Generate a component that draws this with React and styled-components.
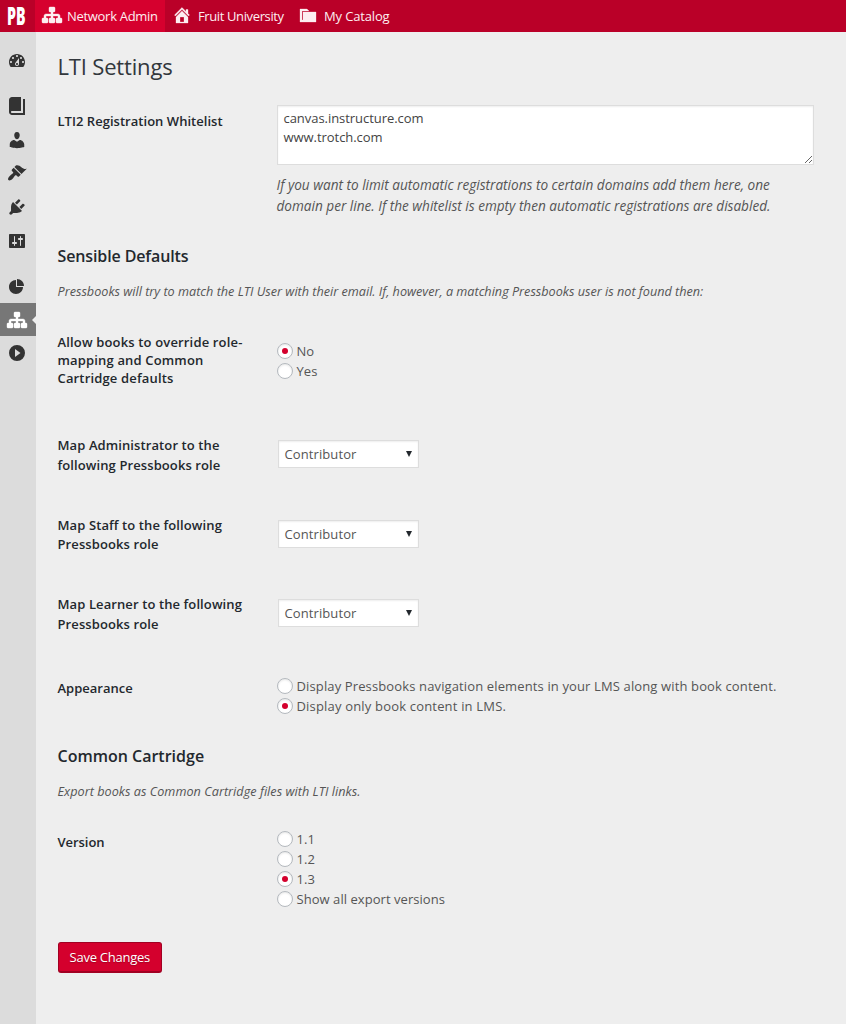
import React from 'react';
import styled, { createGlobalStyle } from 'styled-components';

const GlobalStyle = createGlobalStyle`
  * { box-sizing: border-box; }
  body {
    margin: 0;
    background: #eee;
    color: #444;
    font-family: 'Open Sans', 'Noto Sans', sans-serif;
    font-size: 13px;
  }
`;

const Page = styled.div`
  display: flex;
  flex-direction: column;
  min-height: 1024px;
`;

const TopBar = styled.header`
  display: flex;
  height: 32px;
  background: #ba0028;
  color: #fff;
`;

const Logo = styled.div`
  width: 35px;
  padding: 6px 0 0 7px;
`;

const LogoText = styled.span`
  display: inline-block;
  transform: scaleX(0.58);
  transform-origin: 0 0;
  font-size: 24.5px;
  font-weight: 800;
  line-height: 20px;
`;

const TopItem = styled.a`
  display: flex;
  align-items: center;
  width: ${(p) => p.$width}px;
  padding: 0 0 3px ${(p) => p.$inset}px;
  gap: ${(p) => p.$gap}px;
  background: ${(p) => (p.$active ? '#d6002e' : 'transparent')};
  color: #fdeef1;
  letter-spacing: ${(p) => p.$tracking}px;
  white-space: nowrap;
`;

const TopLabel = styled.span`
  padding-top: 2px;
`;

const Body = styled.div`
  display: flex;
  flex: 1;
`;

const Sidebar = styled.nav`
  width: 36px;
  padding-top: 12px;
  background: #dcdcdc;
`;

const SideGroup = styled.div`
  display: flex;
  flex-direction: column;
  margin-bottom: 11.8px;
`;

const SideItem = styled.a`
  position: relative;
  display: flex;
  align-items: center;
  height: 33.6px;
  padding-left: 7px;
  background: ${(p) => (p.$active ? '#777' : 'transparent')};
  color: ${(p) => (p.$active ? '#fff' : '#333')};
`;

const ActiveNotch = styled.span`
  position: absolute;
  right: 0;
  top: 13px;
  border: 4px solid transparent;
  border-left-width: 0;
  border-right-color: #eee;
`;

const Main = styled.main`
  flex: 1;
  padding: 19px 32px 0 21.5px;
`;

const Title = styled.h1`
  margin: 0 0 23px;
  color: #32373c;
  font-size: 22px;
  font-weight: 400;
  line-height: 31px;
  letter-spacing: -0.17px;
`;

const SectionTitle = styled.h2`
  margin: 0 0 14px;
  color: #23282d;
  font-size: 16px;
  font-weight: 600;
  line-height: 22px;
  letter-spacing: ${(p) => p.$tracking || 0}px;
`;

const Intro = styled.p`
  margin: 0 0 ${(p) => p.$gap}px;
  color: #555;
  font-size: 12.65px;
  font-style: italic;
  line-height: 20px;
  letter-spacing: ${(p) => p.$tracking || 0}px;
`;

const Row = styled.div`
  display: grid;
  grid-template-columns: 219px 1fr;
  align-items: start;
  height: ${(p) => p.$height}px;
`;

const Label = styled.div`
  padding-top: ${(p) => p.$offset || 0}px;
  color: #23282d;
  font-weight: 600;
  line-height: ${(p) => p.$leading || 18}px;
  letter-spacing: ${(p) => p.$tracking ?? 0.1}px;
  white-space: pre-line;
`;

const Control = styled.div`
  padding-top: ${(p) => p.$offset || 0}px;
`;

const TextArea = styled.textarea`
  display: block;
  width: 537px;
  height: 60px;
  margin: 0;
  padding: 3px 6px;
  border: 1px solid #ddd;
  box-shadow: inset 0 1px 2px rgba(0, 0, 0, 0.07);
  background: #fff;
  color: #444;
  font: inherit;
  line-height: 19px;
  letter-spacing: -0.05px;
  overflow: hidden;
`;

const Help = styled.p`
  margin: 8.5px 0 0;
  color: #555;
  font-size: 13.6px;
  font-style: italic;
  line-height: 21px;
  white-space: pre-line;
`;

const RadioLine = styled.label`
  display: flex;
  align-items: center;
  height: 20px;
  gap: 4px;
  color: #555;
  letter-spacing: ${(p) => p.$tracking}px;
  white-space: nowrap;
`;

const RadioDot = styled.span`
  display: flex;
  align-items: center;
  justify-content: center;
  width: 16px;
  height: 16px;
  border: 1px solid #b4b9be;
  border-radius: 50%;
  background: #fff;
  box-shadow: inset 0 1px 2px rgba(0, 0, 0, 0.1);

  &::after {
    content: '';
    width: 6px;
    height: 6px;
    border-radius: 50%;
    background: ${(p) => (p.$checked ? '#d4002d' : 'transparent')};
  }
`;

const SelectBox = styled.div`
  display: flex;
  align-items: center;
  justify-content: space-between;
  width: 141px;
  height: 28px;
  margin-left: 1px;
  padding: 0 6px;
  border: 1px solid #ddd;
  background: #fff;
  box-shadow: inset 0 1px 2px rgba(0, 0, 0, 0.07);
  color: #555;
  letter-spacing: 0.1px;
`;

const Caret = styled.span`
  border: 3px solid transparent;
  border-top: 6px solid #23282d;
  border-bottom-width: 0;
`;

const SaveButton = styled.button`
  display: block;
  width: 104.5px;
  height: 31px;
  padding: 0;
  border: 1px solid #a10022;
  border-bottom-width: 2px;
  border-radius: 3px;
  background: #d4002d;
  color: #fff;
  font: inherit;
  letter-spacing: -0.25px;
  text-shadow: 0 1px 1px #a10022;
`;

const PATHS = {
  network:
    'M18 13h1c.55 0 1 .45 1 1.01v2.98c0 .56-.45 1.01-1 1.01h-4c-.55 0-1-.45-1-1.01v-2.98c0-.56.45-1.01 1-1.01h1v-2h-5v2h1c.55 0 1 .45 1 1.01v2.98c0 .56-.45 1.01-1 1.01H8c-.55 0-1-.45-1-1.01v-2.98c0-.56.45-1.01 1-1.01h1v-2H4v2h1c.55 0 1 .45 1 1.01v2.98C6 17.55 5.55 18 5 18H1c-.55 0-1-.45-1-1.01v-2.98C0 13.45.45 13 1 13h1v-2c0-1.1.9-2 2-2h5V7H8c-.55 0-1-.45-1-1.01V3.01C7 2.45 7.45 2 8 2h4c.55 0 1 .45 1 1.01v2.98C13 6.55 12.55 7 12 7h-1v2h5c1.1 0 2 .9 2 2v2z',
  home: 'M16 8.5l1.53 1.53-1.06 1.06L10 4.6l-6.47 6.49-1.06-1.06L10 2.5l4 4v-2h2v4zm-6-2.46l6 5.99V18H4v-5.97zM12 17v-5H8v5h4z',
  folders: 'M5 7h13v10H2V4h7l2 2H4v9h1V7z',
  dashboard:
    'M3.76 16h12.48c1.1-1.37 1.76-3.11 1.76-5 0-4.42-3.58-8-8-8s-8 3.58-8 8c0 1.89.66 3.63 1.76 5zM10 4c.55 0 1 .45 1 1s-.45 1-1 1-1-.45-1-1 .45-1 1-1zM6 6c.55 0 1 .45 1 1s-.45 1-1 1-1-.45-1-1 .45-1 1-1zm8 0c.55 0 1 .45 1 1s-.45 1-1 1-1-.45-1-1 .45-1 1-1zm-5.37 5.55L12 7v6c0 1.1-.9 2-2 2s-2-.9-2-2c0-.57.24-1.08.63-1.45zM4 10c.55 0 1 .45 1 1s-.45 1-1 1-1-.45-1-1 .45-1 1-1zm12 0c.55 0 1 .45 1 1s-.45 1-1 1-1-.45-1-1 .45-1 1-1zm-5 3c0-.55-.45-1-1-1s-1 .45-1 1 .45 1 1 1 1-.45 1-1z',
  book: 'M16 3h2v16H5c-1.66 0-3-1.34-3-3V4c0-1.66 1.34-3 3-3h9v14H5c-.55 0-1 .45-1 1s.45 1 1 1h11V3z',
  user: 'M10 9.25c-2.27 0-2.73-3.44-2.73-3.44C7 4.02 7.82 2 9.97 2c2.16 0 2.98 2.02 2.71 3.81 0 0-.41 3.44-2.68 3.44zm0 2.57L12.72 10c2.39 0 4.52 2.33 4.52 4.53v2.49s-3.65 1.13-7.24 1.13c-3.65 0-7.24-1.13-7.24-1.13v-2.49c0-2.25 1.94-4.48 4.47-4.48z',
  brush:
    'M14.48 11.06L7.41 3.99l1.5-1.5c.5-.56 2.3-.47 3.51.32 1.21.8 1.43 1.28 2.91 2.1 1.18.64 2.45 1.26 4.45.85zm-.71.71L6.7 4.7 4.93 6.47c-.39.39-.39 1.02 0 1.41l1.06 1.06c.39.39.39 1.03 0 1.42-.6.6-1.43 1.11-2.21 1.69-.35.26-.7.53-1.01.84C1.43 14.23.4 16.08 1.4 17.07c.99 1 2.84-.03 4.18-1.36.31-.31.58-.66.85-1.02.57-.78 1.08-1.61 1.69-2.21.39-.39 1.02-.39 1.41 0l1.06 1.06c.39.39 1.02.39 1.41 0z',
  plug: 'M13.11 4.36L9.87 7.6 8 5.73l3.24-3.24c.35-.34 1.05-.2 1.56.32.52.51.66 1.21.31 1.55zm-8 1.77l.91-1.12 9.01 9.01-1.19.84c-.71.71-2.63 1.16-3.82 1.16H6.14L4.9 17.26c-.59.59-1.54.59-2.12 0-.59-.58-.59-1.53 0-2.12l1.24-1.24v-3.88c0-1.13.4-3.19 1.09-3.89zm7.26 3.97l3.24-3.24c.34-.35 1.04-.21 1.55.31.52.51.66 1.21.31 1.55l-3.24 3.25z',
  sliders:
    'M18 16V4c0-.55-.45-1-1-1H3c-.55 0-1 .45-1 1v12c0 .55.45 1 1 1h14c.55 0 1-.45 1-1zM8 11h1c.55 0 1 .45 1 1s-.45 1-1 1H8v1.5c0 .28-.22.5-.5.5s-.5-.22-.5-.5V13H6c-.55 0-1-.45-1-1s.45-1 1-1h1V5.5c0-.28.22-.5.5-.5s.5.22.5.5V11zm5-2h-1c-.55 0-1-.45-1-1s.45-1 1-1h1V5.5c0-.28.22-.5.5-.5s.5.22.5.5V7h1c.55 0 1 .45 1 1s-.45 1-1 1h-1v5.5c0 .28-.22.5-.5.5s-.5-.22-.5-.5V9z',
  pie: 'M10 10V3c3.87 0 7 3.13 7 7h-7zM9 4v7h7c0 3.87-3.13 7-7 7s-7-3.13-7-7 3.13-7 7-7z',
  collapse: 'M10 2a8 8 0 1 0 0 16 8 8 0 0 0 0-16zM8 6l5.5 4L8 14z',
};

function Icon({ name, weight = 0 }) {
  return (
    <svg
      width="20"
      height="20"
      viewBox="0 0 20 20"
      fill="currentColor"
      fillRule="evenodd"
      stroke="currentColor"
      strokeWidth={weight}
      overflow="visible"
    >
      <path d={PATHS[name]} />
    </svg>
  );
}

function Radio({ checked, tracking = 0.05, children }) {
  return (
    <RadioLine $tracking={tracking}>
      <RadioDot $checked={checked} />
      <span>{children}</span>
    </RadioLine>
  );
}

function RoleSelect() {
  return (
    <SelectBox>
      <span>Contributor</span>
      <Caret />
    </SelectBox>
  );
}

const ROLES = [
  'Map Administrator to the\nfollowing Pressbooks role',
  'Map Staff to the following\nPressbooks role',
  'Map Learner to the following\nPressbooks role',
];

export default function App() {
  return (
    <Page>
      <GlobalStyle />
      <TopBar>
        <Logo>
          <LogoText>PB</LogoText>
        </Logo>
        <TopItem $active $width={130} $inset={7} $gap={5} $tracking={-0.3}>
          <Icon name="network" weight={0.4} />
          <TopLabel>Network Admin</TopLabel>
        </TopItem>
        <TopItem $width={126} $inset={7} $gap={6} $tracking={-0.38}>
          <Icon name="home" weight={0.3} />
          <TopLabel>Fruit University</TopLabel>
        </TopItem>
        <TopItem $width={110} $inset={7} $gap={6} $tracking={-0.15}>
          <Icon name="folders" weight={0.3} />
          <TopLabel>My Catalog</TopLabel>
        </TopItem>
      </TopBar>
      <Body>
        <Sidebar>
          <SideGroup>
            <SideItem><Icon name="dashboard" /></SideItem>
          </SideGroup>
          <SideGroup>
            <SideItem><Icon name="book" /></SideItem>
            <SideItem><Icon name="user" /></SideItem>
            <SideItem><Icon name="brush" /></SideItem>
            <SideItem><Icon name="plug" /></SideItem>
            <SideItem><Icon name="sliders" /></SideItem>
          </SideGroup>
          <SideGroup>
            <SideItem><Icon name="pie" /></SideItem>
            <SideItem $active>
              <Icon name="network" weight={0.4} />
              <ActiveNotch />
            </SideItem>
            <SideItem><Icon name="collapse" /></SideItem>
          </SideGroup>
        </Sidebar>
        <Main>
          <Title>LTI Settings</Title>
          <Row $height={140}>
            <Label $offset={7} $tracking={0.03}>LTI2 Registration Whitelist</Label>
            <Control>
              <TextArea defaultValue={'canvas.instructure.com\nwww.trotch.com'} />
              <Help>
                {'If you want to limit automatic registrations to certain domains add them here, one\ndomain per line. If the whitelist is empty then automatic registrations are disabled.'}
              </Help>
            </Control>
          </Row>

          <SectionTitle $tracking={-0.12}>Sensible Defaults</SectionTitle>
          <Intro $gap={31}>
            Pressbooks will try to match the LTI User with their email. If, however, a matching Pressbooks user is not found then:
          </Intro>
          <Row $height={104}>
            <Label $offset={1} $tracking={0.16}>{'Allow books to override role-\nmapping and Common\nCartridge defaults'}</Label>
            <Control $offset={9}>
              <Radio checked>No</Radio>
              <Radio>Yes</Radio>
            </Control>
          </Row>
          {ROLES.map((role) => (
            <Row key={role} $height={79.6}>
              <Label $leading={19.8}>{role}</Label>
              <Control $offset={4}>
                <RoleSelect />
              </Control>
            </Row>
          ))}
          <Row $height={70}>
            <Label $offset={4} $tracking={0}>Appearance</Label>
            <Control $offset={1}>
              <Radio tracking={0.13}>Display Pressbooks navigation elements in your LMS along with book content.</Radio>
              <Radio checked tracking={0.18}>Display only book content in LMS.</Radio>
            </Control>
          </Row>

          <SectionTitle>Common Cartridge</SectionTitle>
          <Intro $gap={28} $tracking={0.03}>Export books as Common Cartridge files with LTI links.</Intro>
          <Row $height={113}>
            <Label $offset={4} $tracking={-0.05}>Version</Label>
            <Control>
              <Radio>1.1</Radio>
              <Radio>1.2</Radio>
              <Radio checked>1.3</Radio>
              <Radio>Show all export versions</Radio>
            </Control>
          </Row>
          <SaveButton>Save Changes</SaveButton>
        </Main>
      </Body>
    </Page>
  );
}
